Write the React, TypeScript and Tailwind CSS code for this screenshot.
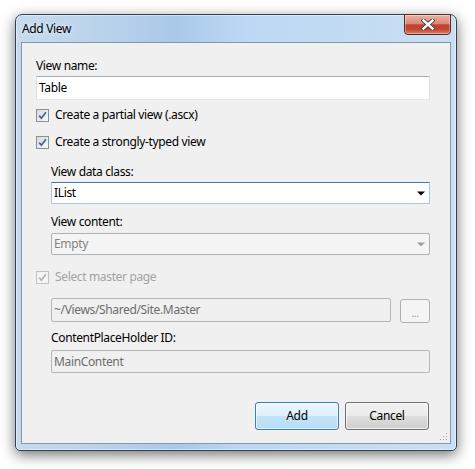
import React from "react";

function Check({ disabled }: { disabled?: boolean }) {
  return (
    <span
      className={
        disabled
          ? "w-[13px] h-[13px] border border-[#c2c2c2] bg-[#f4f4f4] flex items-center justify-center shrink-0"
          : "w-[13px] h-[13px] border border-[#8e8f8f] bg-[linear-gradient(135deg,#d6d9de,#f7f8f9)] flex items-center justify-center shrink-0"
      }
    >
      <svg width="9" height="9" viewBox="0 0 9 9">
        <path
          d="M1.2 4.6 L3.4 7.2 L7.9 1.2"
          fill="none"
          stroke={disabled ? "#b4b4b4" : "#4a5f97"}
          strokeWidth="1.7"
        />
      </svg>
    </span>
  );
}

function Arrow({ color }: { color: string }) {
  return (
    <svg width="8" height="5" viewBox="0 0 8 5">
      <path d="M0 0.5 H8 L4 4.5 Z" fill={color} />
    </svg>
  );
}

export default function App() {
  return (
    <div className="w-[475px] h-[469px] bg-white pl-[15px] pt-[14px] font-['Noto_Sans',sans-serif] text-[12px] leading-[16px] tracking-[-0.35px] text-black">
      <div className="relative w-[442px] h-[437px] border border-[#34424f] rounded-t-[7px] rounded-b-[5px] bg-[linear-gradient(90deg,#c6dbef_0%,#b8d1eb_22%,#a9c9ea_36%,#bcd8f4_52%,#c2dbf4_72%,#c9def2_100%)] shadow-[inset_0_0_0_1px_rgba(255,255,255,0.45),0_4px_14px_rgba(0,0,0,0.55)] flex flex-col">
        {/* Title bar */}
        <div className="h-[27px] flex items-start justify-between">
          <div className="pl-[6px] pt-[6px] [text-shadow:0_0_6px_rgba(255,255,255,0.9)]">Add View</div>
          <div className="mt-[-1px] mr-[5px] w-[47px] h-[21px] border border-[#5b2a22] rounded-b-[4px] bg-[linear-gradient(180deg,#e9b1a3_0%,#d98b79_45%,#c4432e_52%,#c3432f_75%,#d9826f_100%)] shadow-[inset_0_0_0_1px_rgba(255,255,255,0.35)] flex items-center justify-center">
            <svg width="14" height="11" viewBox="0 0 14 11">
              <path d="M2.5 1.5 L11.5 9.5 M11.5 1.5 L2.5 9.5" stroke="#3b3b3b" strokeWidth="4.2" strokeLinecap="square" />
              <path d="M2.5 1.5 L11.5 9.5 M11.5 1.5 L2.5 9.5" stroke="#ffffff" strokeWidth="2.4" strokeLinecap="square" />
            </svg>
          </div>
        </div>

        {/* Client area */}
        <div className="relative mx-[5px] h-[402px] border border-[#8596a8] bg-[#f0f0f0] pl-[14px] flex flex-col">
          <div className="mt-[15px] h-[16px]">View name:</div>
          <div className="mt-[2px] w-[394px] h-[24px] border border-[#abadb3] border-l-[#dbdfe6] border-r-[#dbdfe6] border-b-[#e3e9ef] bg-white pl-[2px] flex items-center">
            Table
          </div>

          <div className="mt-[7px] h-[16px] flex items-center gap-[6px]">
            <Check />
            <span>Create a partial view (.ascx)</span>
          </div>
          <div className="mt-[11px] h-[16px] flex items-center gap-[6px]">
            <Check />
            <span>Create a strongly-typed view</span>
          </div>

          <div className="pl-[15px] flex flex-col">
            <div className="mt-[14px] h-[16px]">View data class:</div>
            <div className="mt-[2px] w-[379px] h-[22px] border border-[#a9c6e2] border-t-[#3c7bab] bg-white pl-[2px] pr-[4px] flex items-center justify-between">
              <span>IList</span>
              <Arrow color="#000000" />
            </div>
            <div className="mt-[10px] h-[16px]">View content:</div>
            <div className="mt-[3px] w-[379px] h-[22px] border border-[#adb2b5] rounded-[2px] bg-[#f4f4f4] pl-[2px] pr-[4px] flex items-center justify-between text-[#838383]">
              <span>Empty</span>
              <Arrow color="#a0a0a0" />
            </div>
          </div>

          <div className="mt-[14px] h-[16px] flex items-center gap-[6px] text-[#a3a3a3]">
            <Check disabled />
            <span>Select master page</span>
          </div>

          <div className="pl-[15px] flex flex-col">
            <div className="mt-[13px] flex items-start gap-[9px]">
              <div className="w-[340px] h-[24px] border border-[#b5b5b5] rounded-[2px] bg-[#f0f0f0] pl-[2px] flex items-center text-[#6d6d6d]">
                ~/Views/Shared/Site.Master
              </div>
              <div className="mt-[1px] w-[30px] h-[24px] border border-[#adb2b5] rounded-[3px] bg-[#f4f4f4] flex items-center justify-center text-[#9a9a9a] text-[10px] leading-[10px] pt-[3px]">
                ...
              </div>
            </div>
            <div className="mt-[7px] h-[16px]">ContentPlaceHolder ID:</div>
            <div className="mt-[4px] w-[379px] h-[23px] border border-[#b5b5b5] rounded-[2px] bg-[#f0f0f0] pl-[2px] flex items-center text-[#6d6d6d]">
              MainContent
            </div>
          </div>

          <div className="mt-[29px] pr-[21px] flex justify-end gap-[6px]">
            <div className="w-[84px] h-[28px] border border-[#3c7fb1] rounded-[3px] bg-[linear-gradient(180deg,#edf7fd_0%,#dcf0fc_48%,#c4e4f8_52%,#b6dcf4_100%)] shadow-[inset_0_0_0_1px_rgba(255,255,255,0.6)] flex items-center justify-center">
              Add
            </div>
            <div className="w-[84px] h-[28px] border border-[#707070] rounded-[3px] bg-[linear-gradient(180deg,#f2f2f2_0%,#ebebeb_48%,#dddddd_52%,#cfcfcf_100%)] shadow-[inset_0_0_0_1px_rgba(255,255,255,0.6)] flex items-center justify-center">
              Cancel
            </div>
          </div>

          <svg className="absolute right-[2px] bottom-[2px]" width="8" height="8" viewBox="0 0 8 8">
            <rect x="6" y="0" width="1" height="1" fill="#a0a0a0" />
            <rect x="3" y="3" width="1" height="1" fill="#a0a0a0" />
            <rect x="6" y="3" width="1" height="1" fill="#a0a0a0" />
            <rect x="0" y="6" width="1" height="1" fill="#a0a0a0" />
            <rect x="3" y="6" width="1" height="1" fill="#a0a0a0" />
            <rect x="6" y="6" width="1" height="1" fill="#a0a0a0" />
          </svg>
        </div>
      </div>
    </div>
  );
}
